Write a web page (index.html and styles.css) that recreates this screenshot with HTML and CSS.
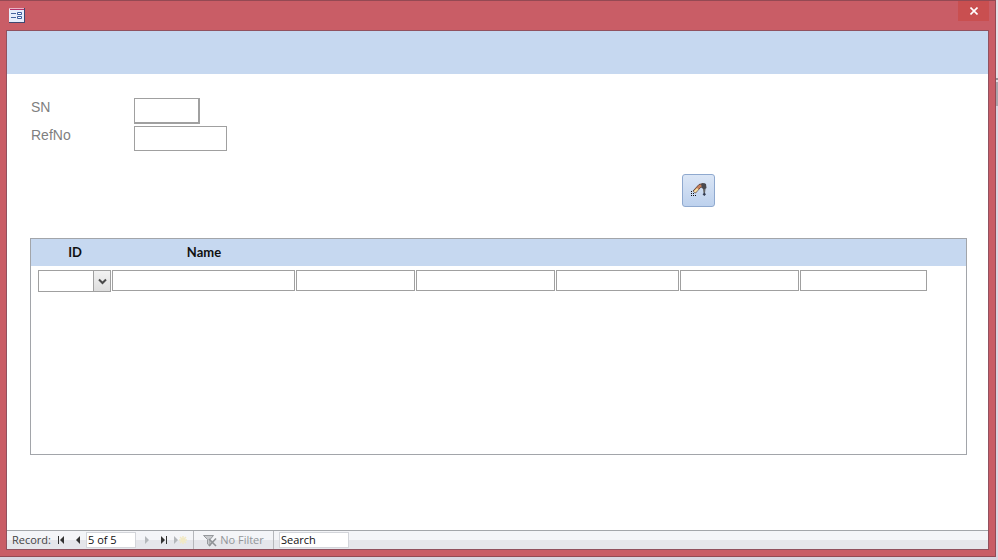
FILE: index.html
```
<!DOCTYPE html>
<html lang="en">
<head>
    <meta charset="UTF-8">
    <meta name="viewport" content="width=device-width, initial-scale=1.0">
    <title>Record Form</title>
    <link rel="stylesheet" href="styles.css">
</head>
<body>
    <div class="window">
        <header class="titlebar">
            <svg class="form-icon" width="16" height="15" viewBox="0 0 16 15" aria-hidden="true">
                <rect x="0" y="0" width="16" height="15" fill="#3e4770"/>
                <rect x="0" y="0" width="15" height="14" fill="#e6edfb"/>
                <rect x="0" y="0" width="15" height="1" fill="#e9b3c6"/>
                <rect x="1" y="1" width="14" height="1" fill="#b3316a"/>
                <path d="M2 5.5h5M2 9.5h5" stroke="#46649f"/>
                <path d="M8.5 4.500h4v2h-4zM8.5 8.5h4v2h-4z" fill="#fff" stroke="#3c5c9e"/>
            </svg>
            <button class="close" type="button" aria-label="Close">
                <svg width="8" height="8" viewBox="0 0 8 8" aria-hidden="true">
                    <path d="M.5.5l7 7M7.5.5l-7 7" stroke="#fff" stroke-width="1.600"/>
                </svg>
            </button>
        </header>
        <main class="client">
            <div class="form-header"></div>
            <form class="detail">
                <div class="fields">
                    <label for="sn">SN</label>
                    <input class="sn" id="sn" type="text">
                    <label for="refno">RefNo</label>
                    <input class="refno" id="refno" type="text">
                </div>
                <div class="tools">
                    <button class="tool" type="button" aria-label="Edit record">
                        <svg width="16" height="15" viewBox="0 0 16 15" aria-hidden="true">
                            <path d="M0 8h1v1H0zM0 10h1v1H0zM2 10h1v1H2zM0 12h1v1H0zM2 12h1v1H2zM4 12h1v1H4z" fill="#111"/>
                            <path d="M2 8L8 1.500l4-1 1 3-3.500 1L4.500 10z" fill="#c98059" stroke="#4b342c" stroke-width=".8"/>
                            <path d="M2.500 8.500L6 5l1.500 1.500-3 3z" fill="#f4dfa0"/>
                            <path d="M10 1l3-1 2 1 .5 4-2.500 2-2-2z" fill="#4a4a50"/>
                            <path d="M12 6h2.500l-.5 4h-1.500z" fill="#666"/>
                            <path d="M13.300 9.500l1.700 1.700-1.700 1.800-1.700-1.800z" fill="#333b50"/>
                        </svg>
                    </button>
                </div>
                <div class="subform">
                    <table>
                        <colgroup>
                            <col class="c-id"><col class="c-name"><col class="c-a"><col class="c-b"><col class="c-c"><col class="c-a"><col class="c-d"><col>
                        </colgroup>
                        <thead>
                            <tr>
                                <th>ID</th>
                                <th>Name</th>
                                <th></th>
                                <th></th>
                                <th></th>
                                <th></th>
                                <th></th>
                                <th></th>
                            </tr>
                        </thead>
                        <tbody>
                            <tr>
                                <td>
                                    <div class="combo">
                                        <select aria-label="ID"><option></option></select>
                                        <span class="arrow">
                                            <svg width="9" height="7" viewBox="0 0 9 7" aria-hidden="true"><path d="M1 1.500l3.500 3.500L8 1.500" fill="none" stroke="#4a4a4a" stroke-width="2"/></svg>
                                        </span>
                                    </div>
                                </td>
                                <td><input type="text" aria-label="Name"></td>
                                <td><input type="text" aria-label="Column 3"></td>
                                <td><input type="text" aria-label="Column 4"></td>
                                <td><input type="text" aria-label="Column 5"></td>
                                <td><input type="text" aria-label="Column 6"></td>
                                <td><input type="text" aria-label="Column 7"></td>
                                <td></td>
                            </tr>
                        </tbody>
                    </table>
                </div>
            </form>
            <footer class="navbar">
                <label for="record">Record:</label>
                <button type="button" aria-label="First record">
                    <svg width="8" height="8" viewBox="0 0 8 8"><path d="M1 0h1v8H1zM7 0v8L3 4z" fill="#333"/></svg>
                </button>
                <button type="button" aria-label="Previous record">
                    <svg width="8" height="8" viewBox="0 0 8 8"><path d="M6 0v8L2 4z" fill="#333"/></svg>
                </button>
                <input class="record" id="record" type="text" value="5 of 5">
                <button type="button" aria-label="Next record" disabled>
                    <svg width="8" height="8" viewBox="0 0 8 8"><path d="M2 0v8l4-4z" fill="#b4b7bb"/></svg>
                </button>
                <button type="button" aria-label="Last record">
                    <svg width="8" height="8" viewBox="0 0 8 8"><path d="M6 0h1v8H6zM1 0v8l4-4z" fill="#333"/></svg>
                </button>
                <button class="new" type="button" aria-label="New record" disabled>
                    <svg width="13" height="8" viewBox="0 0 13 8"><path d="M0 0v8l4-4z" fill="#b4b7bb"/><path d="M9 0v8M5 4h8M6 1l6 6M12 1L6 7" stroke="#f1e9c4" stroke-width="1.500"/></svg>
                </button>
                <button class="filter" type="button" disabled>
                    <svg width="14" height="13" viewBox="0 0 14 13" aria-hidden="true">
                        <path d="M.5 1.500h10L7 5.500V12L4.500 10V5.500z" fill="#c9cbce" stroke="#96999d"/>
                        <path d="M6 5l7 7M13 4.500L6 12" stroke="#8f9296" stroke-width="1.600"/>
                    </svg>
                    No Filter
                </button>
                <input class="search" type="text" value="Search" aria-label="Search">
            </footer>
        </main>
    </div>
</body>
</html>
```
FILE: styles.css
```
* {
    box-sizing: border-box;
}
body {
    display: flex;
    min-height: 100vh;
    margin: 0;
    padding: 0 2px 3px 0;
    font-family: "Open Sans", "Noto Sans", sans-serif;
    font-size: 11px;
    background: linear-gradient(#e4e1e7 78px, #918f97 78px, #918f97 80px, #e4e1e7 80px, #e4e1e7 82px, #aaa5ac 82px, #aaa5ac 106px, #d9d5e0 106px);
}
button,
input,
select {
    margin: 0;
    padding: 0;
    font: inherit;
}
.window {
    display: flex;
    flex: 1;
    flex-direction: column;
    padding: 0 6px 6px 6px;
    background: #c95d66;
    border: 1px solid #944953;
    border-left: 0;
}
.titlebar {
    display: flex;
    justify-content: space-between;
    align-items: flex-start;
    height: 29px;
}
.form-icon {
    margin: 7px 0 0 3px;
}
.close {
    display: flex;
    align-items: center;
    justify-content: center;
    width: 31px;
    height: 20px;
    background: #c94f50;
    border: 0;
}
.client {
    display: flex;
    flex: 1;
    flex-direction: column;
    background: #fff;
    border: 1px solid #91515f;
}
.form-header {
    height: 43px;
    background: #c6d8f0;
}
.detail {
    display: flex;
    flex: 1;
    flex-direction: column;
    padding: 24px 21px 0 23px;
}
.fields {
    display: grid;
    grid-template-columns: 104px 1fr;
    row-gap: 2px;
}
.fields label {
    padding-left: 1px;
    color: #7f7f7f;
    font-family: "Liberation Sans", Arial, sans-serif;
    font-size: 14px;
    line-height: 18px;
}
.fields input {
    height: 26px;
    border: 1px solid #a0a0a0;
}
.fields .sn {
    width: 66px;
    border-right-width: 2px;
    border-bottom-width: 2px;
}
.fields .refno {
    width: 93px;
    height: 25px;
}
.tools {
    display: flex;
    justify-content: flex-end;
    padding: 23px 252px 31px 0;
}
.tool {
    display: flex;
    align-items: center;
    justify-content: center;
    width: 33px;
    height: 33px;
    background: linear-gradient(#dbe6f6, #bdd1ed);
    border: 1px solid #8fa9cf;
    border-radius: 3px;
}
.subform {
    height: 217px;
    border: 1px solid #a2a5aa;
}
table {
    width: 100%;
    table-layout: fixed;
    border-collapse: collapse;
}
.c-id {
    width: 81px;
}
.c-name {
    width: 184px;
}
.c-a {
    width: 120px;
}
.c-b {
    width: 140px;
}
.c-c {
    width: 124px;
}
.c-d {
    width: 128px;
}
th {
    height: 27px;
    padding: 0 0 2px;
    background: #c6d8f0;
    color: #111;
    font-family: Lato, "Open Sans", sans-serif;
    font-size: 13px;
    line-height: 18px;
}
td {
    padding: 4px 1px 0 0;
    vertical-align: top;
}
th:first-child,
td:first-child {
    padding-left: 7px;
}
td input {
    display: block;
    width: 100%;
    height: 21px;
    border: 1px solid #a0a0a0;
}
.combo {
    position: relative;
}
.combo select {
    display: block;
    width: 100%;
    height: 22px;
    appearance: none;
    background: #fff;
    border: 1px solid #a0a0a0;
    border-radius: 0;
}
.arrow {
    position: absolute;
    top: 0;
    right: 0;
    display: flex;
    align-items: center;
    justify-content: center;
    width: 18px;
    height: 22px;
    background: linear-gradient(#f2f2f2, #dedede);
    border: 1px solid #a0a0a0;
    pointer-events: none;
}
.navbar {
    display: flex;
    align-items: center;
    height: 19px;
    padding-left: 5px;
    background: linear-gradient(#f4f5f8 50%, #e5e6eb 50%);
    border-top: 1px solid #a3a6aa;
    color: #444;
    line-height: 18px;
}
.navbar label {
    width: 40px;
}
.navbar button {
    display: flex;
    align-items: center;
    justify-content: center;
    width: 17px;
    height: 18px;
    background: none;
    border: 0;
}
.navbar input {
    height: 16px;
    padding: 0 1px;
    background: #fff;
    border: 1px solid #d3d5da;
    color: #111;
}
.navbar .record {
    width: 50px;
}
.navbar .record + button {
    margin-left: 2px;
}
.navbar .new {
    margin-right: 4px;
}
.navbar .filter {
    gap: 3px;
    width: 81px;
    border: solid #b5b7bb;
    border-width: 0 1px;
    color: #929599;
}
.navbar .search {
    width: 70px;
    margin-left: 5px;
}
```
